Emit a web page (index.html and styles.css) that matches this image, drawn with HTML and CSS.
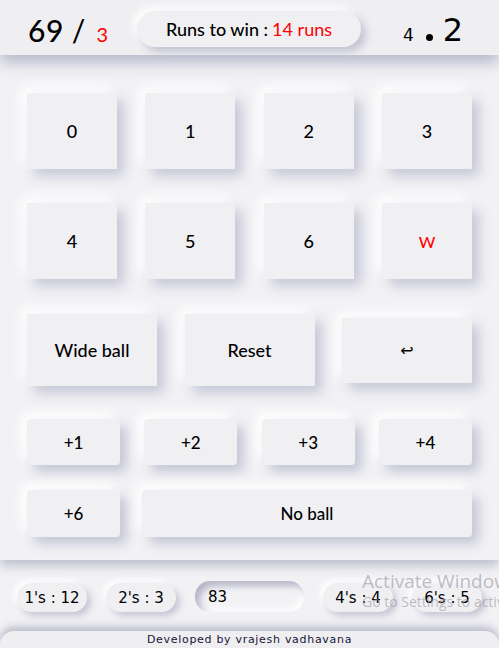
FILE: index.html
```html
<!DOCTYPE html>
<html>
<head>
<meta charset="utf-8">
<link rel="stylesheet" href="styles.css">
</head>
<body>
<header class="top">
  <div class="score"><span class="runs">69</span><span class="slash">/</span><span class="wk">3</span></div>
  <div class="target">Runs to win : <span class="red">14 runs</span></div>
  <div class="overs"><span class="ov-small">4</span><span class="ov-dot"></span><span class="ov-big">2</span></div>
</header>
<main class="pad">
  <div class="row row-4">
    <button class="btn sq">0</button>
    <button class="btn sq">1</button>
    <button class="btn sq">2</button>
    <button class="btn sq">3</button>
  </div>
  <div class="row row-4 r2">
    <button class="btn sq">4</button>
    <button class="btn sq">5</button>
    <button class="btn sq">6</button>
    <button class="btn sq wkt">W</button>
  </div>
  <div class="row row-3">
    <button class="btn wide">Wide ball</button>
    <button class="btn wide">Reset</button>
    <button class="btn wide undo">↩</button>
  </div>
  <div class="row row-4 r4">
    <button class="btn ex">+1</button>
    <button class="btn ex">+2</button>
    <button class="btn ex">+3</button>
    <button class="btn ex">+4</button>
  </div>
  <div class="row r5">
    <button class="btn ex">+6</button>
    <button class="btn ex grow">No ball</button>
  </div>
</main>
<section class="stats">
  <div class="pill">1's : 12</div>
  <div class="pill">2's : 3</div>
  <div class="input">83</div>
  <div class="pill">4's : 4</div>
  <div class="pill">6's : 5</div>
  <div class="watermark"><div class="wm1">Activate Windows</div><div class="wm2">Go to Settings to activate Windows.</div></div>
</section>
<footer class="foot">Developed by vrajesh vadhavana</footer>
</body>
</html>
```
FILE: styles.css
```css
* { box-sizing: border-box; }
html, body { margin: 0; padding: 0; }
body {
  background: #f2f2f5;
  width: 499px;
  height: 648px;
  overflow: hidden;
  font-family: Lato, "Liberation Sans", sans-serif;
  color: #000;
}
.top {
  height: 55px;
  background: #efeff2;
  display: flex;
  align-items: center;
  padding-left: 28px;
  box-shadow: 0 8px 14px #b9b9cb;
  position: relative;
  z-index: 2;
}
.score {
  display: flex;
  align-items: baseline;
  width: 109px;
  padding-top: 4px;
}
.runs { font-size: 30px; font-weight: 500; letter-spacing: 0.5px; }
.slash { font-size: 30px; margin-left: 8px; }
.wk { font-size: 20px; color: #ff0000; margin-left: 11px; }
.target {
  width: 224px;
  height: 36px;
  margin-top: 2px;
  border-radius: 18px;
  background: #f0f0f3;
  box-shadow: 5px 5px 8px #c3c3d2, -4px -4px 8px #ffffff;
  display: flex;
  align-items: center;
  justify-content: center;
  font-size: 18px;
  font-weight: 500;
}
.red { color: #ff0000; font-weight: 400; margin-left: 4px; }
.overs {
  margin-left: 42px;
  display: flex;
  align-items: baseline;
  font-family: "DejaVu Sans", sans-serif;
  padding-top: 4px;
}
.ov-small { font-size: 17px; }
.ov-dot {
  display: inline-block;
  width: 7px;
  height: 7px;
  border-radius: 50%;
  background: #000;
  margin: 0 10px 0 12px;
}
.ov-big { font-size: 32px; }
.pad {
  background: #f2f2f5;
  padding: 38px 27px 23px 27px;
  box-shadow: 0 6px 10px #c0c0d0;
  position: relative;
  z-index: 1;
  height: 505px;
}
.row { display: flex; justify-content: space-between; width: 445px; }
.btn {
  border: none;
  background: #f0f0f3;
  font-family: Lato, "Liberation Sans", sans-serif;
  font-size: 18px;
  font-weight: 500;
  color: #000;
  padding: 0;
  display: flex;
  align-items: center;
  justify-content: center;
  box-shadow: 7px 7px 12px #c6c7d6, -6px -6px 12px #ffffff;
}
.sq { width: 90px; height: 76px; }
.r2 { margin-top: 34px; }
.wkt { color: #ff0000; font-size: 16px; }
.row-3 { margin-top: 35px; align-items: center; }
.wide { width: 130px; height: 72px; }
.undo { height: 65px; font-family: "DejaVu Sans", sans-serif; font-size: 16px; }
.r4 { margin-top: 33px; }
.ex { width: 93px; height: 46px; border-radius: 4px; font-size: 17px; }
.r5 { margin-top: 25px; justify-content: flex-start; gap: 22px; }
.r5 .ex { height: 47px; }
.grow { flex: 1; }
.stats {
  height: 71px;
  display: flex;
  align-items: center;
  padding: 0 0 0 17px;
  gap: 19px;
  position: relative;
  font-family: "DejaVu Sans", sans-serif;
  font-size: 15px;
}
.pill {
  width: 70px;
  height: 29px;
  border-radius: 15px;
  background: #f0f0f3;
  box-shadow: 4px 4px 7px #c6c6d5, -3px -3px 6px #ffffff;
  display: flex;
  align-items: center;
  justify-content: center;
  margin-top: 4px;
}
.input {
  width: 109px;
  height: 31px;
  border-radius: 15px;
  background: #f3f3f6;
  box-shadow: inset 5px 5px 7px #b6b6c8, inset -3px -3px 6px #ffffff;
  display: flex;
  align-items: center;
  padding-left: 13px;
  margin-top: 2px;
}
.watermark {
  position: absolute;
  left: 362px;
  top: 10px;
  width: 137px;
  overflow: hidden;
  color: rgba(150, 150, 160, 0.6);
  font-family: "Open Sans", "DejaVu Sans", sans-serif;
  white-space: nowrap;
  pointer-events: none;
}
.wm1 { font-size: 19px; line-height: 23px; }
.wm2 { font-size: 14px; line-height: 18px; }
.foot {
  height: 20px;
  background: #efeff2;
  border-radius: 14px 14px 0 0;
  box-shadow: 0 -4px 8px #b9b9cb;
  text-align: center;
  font-family: "DejaVu Sans", sans-serif;
  font-size: 11px;
  letter-spacing: 0.7px;
  color: #151535;
  padding-top: 2px;
  position: relative;
  z-index: 1;
}
```
